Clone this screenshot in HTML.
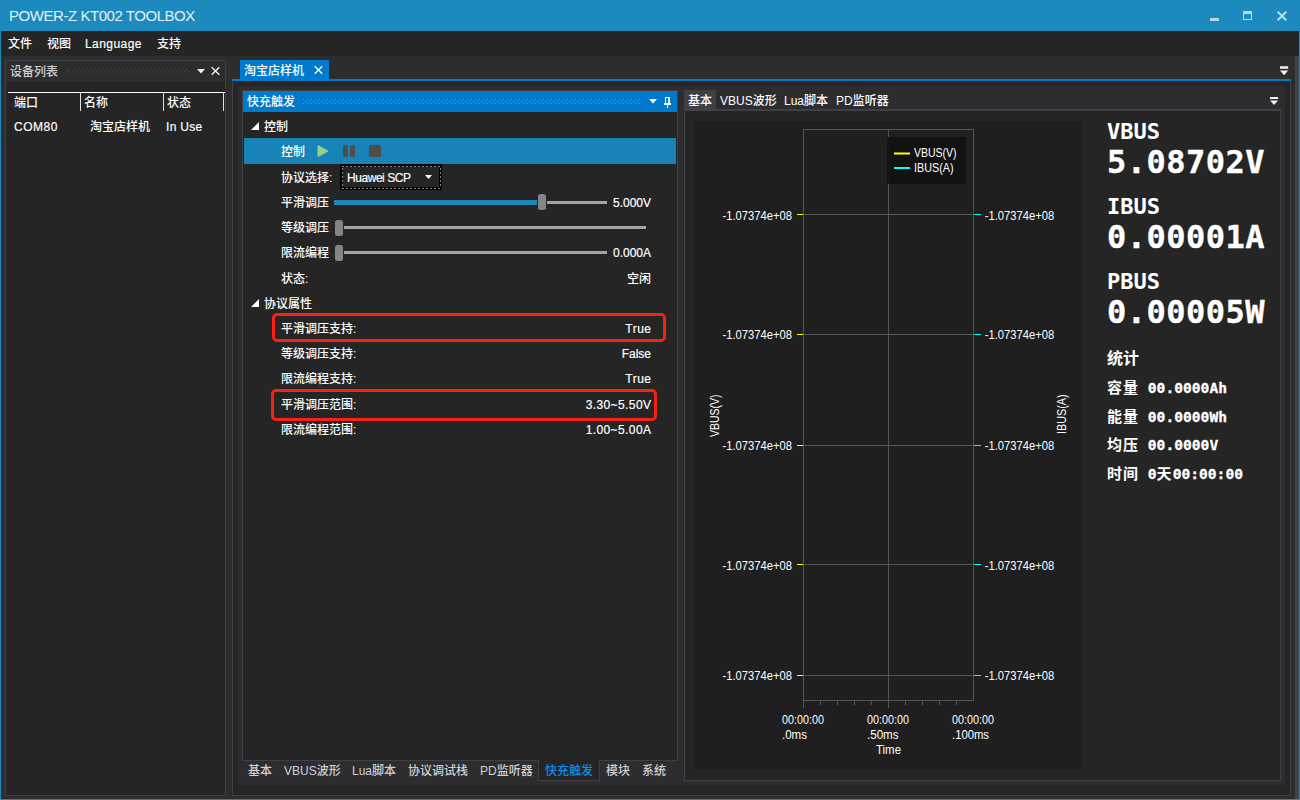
<!DOCTYPE html>
<html lang="zh-CN">
<head>
<meta charset="utf-8">
<title>POWER-Z KT002 TOOLBOX</title>
<style>
*{box-sizing:border-box;margin:0;padding:0}
html,body{width:1300px;height:800px;overflow:hidden;background:#2d2d30}
body{position:relative;font-family:"Liberation Sans","Noto Sans CJK SC",sans-serif;font-size:12px;color:#fff;line-height:16px;font-weight:500}
.a{position:absolute}
.t{position:absolute;white-space:nowrap;line-height:16px;height:16px;font-size:12px;color:#fff}
.r{text-align:right}
.l{-webkit-text-stroke:0.18px #fff}
.ct{stroke:none}
.mono{font-family:"DejaVu Sans Mono","Noto Sans CJK SC",monospace;font-weight:bold}
.bd{border:1px solid #3f3f46}
svg{position:absolute;overflow:visible}
.st{font-size:16px;line-height:22px;height:22px}
.st .mono{font-size:14.62px;-webkit-text-stroke:0.3px #fff}
.st b{font-size:15px;letter-spacing:1px}
.grip{background-image:radial-gradient(circle at 0.5px 0.5px,#4b4b50 0.6px,transparent 0.7px),radial-gradient(circle at 2.5px 2.5px,#4b4b50 0.6px,transparent 0.7px);background-size:4px 4px}
.grip2{background-image:radial-gradient(circle at 0.5px 0.5px,#459fe0 0.6px,transparent 0.7px),radial-gradient(circle at 2.5px 2.5px,#459fe0 0.6px,transparent 0.7px);background-size:4px 4px}

</style>
</head>
<body>
<!-- window frame -->
<div class="a" style="left:0;top:0;width:1300px;height:800px;background:#1c8abc"></div>
<div class="a" style="left:1px;top:31px;width:1298px;height:768px;background:#2d2d30"></div>
<!-- title bar -->
<div class="t" id="title" style="left:9px;top:6px;font-size:15px;line-height:20px;height:20px;color:#e2f0f8;letter-spacing:-0.45px">POWER-Z KT002 TOOLBOX</div>
<!-- window buttons -->
<div class="a" style="left:1210px;top:18px;width:9px;height:3px;background:#b6daec"></div>
<div class="a" style="left:1243px;top:11px;width:9px;height:9px;border:1px solid #b6daec;border-top-width:3px"></div>
<svg style="left:1277px;top:11px" width="10" height="10" viewBox="0 0 10 10"><path d="M0.7 0.7L9.3 9.3M9.3 0.7L0.7 9.3" stroke="#b6daec" stroke-width="2.1" fill="none"/></svg>
<!-- menu bar -->
<div class="a" style="left:1px;top:31px;width:1298px;height:25px;background:#252526"></div>
<div class="t" style="left:8px;top:36px">文件</div>
<div class="t" style="left:47px;top:36px">视图</div>
<div class="t l" id="lang" style="left:85px;top:36px;letter-spacing:0.45px">Language</div>
<div class="t" style="left:157px;top:36px">支持</div>
<!-- right strip -->
<div class="a" style="left:1295px;top:56px;width:4px;height:743px;background:#444445"></div>

<!-- LEFT PANEL -->
<div class="a bd" style="left:5px;top:60px;width:221px;height:736px;background:#252526"></div>
<div class="a" style="left:6px;top:61px;width:219px;height:21px;background:#2d2d30"></div>
<div class="t" style="left:10px;top:64px;color:#d0d0d0">设备列表</div>
<div class="a grip" style="left:66px;top:69px;width:124px;height:6px"></div>
<svg style="left:197px;top:69px" width="8" height="5" viewBox="0 0 8 5"><path d="M0 0H8L4 4.5Z" fill="#f1f1f1"/></svg>
<svg style="left:211px;top:67px" width="9" height="8" viewBox="0 0 9 8"><path d="M0.7 0.3L8.3 7.7M8.3 0.3L0.7 7.7" stroke="#f1f1f1" stroke-width="1.4" fill="none"/></svg>
<div class="a" style="left:8px;top:92px;width:217px;height:1px;background:#fff"></div>
<div class="a" style="left:80px;top:92px;width:1px;height:19px;background:#e0e0e0"></div>
<div class="a" style="left:163px;top:92px;width:1px;height:19px;background:#e0e0e0"></div>
<div class="a" style="left:223px;top:92px;width:1px;height:19px;background:#e0e0e0"></div>
<div class="t" style="left:14px;top:95px">端口</div>
<div class="t" style="left:84px;top:95px">名称</div>
<div class="t" style="left:167px;top:95px">状态</div>
<div class="t l" id="com" style="left:14px;top:119px;letter-spacing:0.5px">COM80</div>
<div class="t" style="left:90px;top:119px">淘宝店样机</div>
<div class="t l" id="inuse" style="left:166px;top:119px;letter-spacing:0.3px">In Use</div>

<!-- DOCUMENT AREA -->
<div class="a" style="left:240px;top:60px;width:89px;height:20px;background:#007acc"></div>
<div class="t" style="left:244px;top:63px">淘宝店样机</div>
<svg style="left:314px;top:66px" width="9" height="8" viewBox="0 0 9 8"><path d="M0.7 0.3L8.3 7.7M8.3 0.3L0.7 7.7" stroke="#fff" stroke-width="1.3" fill="none"/></svg>
<svg style="left:1280px;top:66px" width="8" height="10" viewBox="0 0 8 10"><path d="M0 0.3H8.2V2.8H0ZM0 4.4H8.2L4.1 9.2Z" fill="#f1f1f1"/></svg>
<div class="a bd" style="left:232px;top:79px;width:1059px;height:717px;background:#252526"></div>
<div class="a" style="left:232px;top:79px;width:1059px;height:2px;background:#007acc"></div>
<div class="a" style="left:238px;top:86px;width:1047px;height:699px;background:#2d2d30"></div>

<!-- QUICK CHARGE PANEL -->
<div class="a bd" style="left:242px;top:90px;width:436px;height:671px;background:#252526"></div>
<div class="a" style="left:243px;top:91px;width:434px;height:21px;background:#007acc"></div>
<div class="t" style="left:247px;top:94px">快充触发</div>
<div class="a grip2" style="left:303px;top:99px;width:338px;height:6px"></div>
<svg style="left:649px;top:99px" width="8" height="5" viewBox="0 0 8 5"><path d="M0 0H8L4 4.5Z" fill="#fff"/></svg>
<svg style="left:664px;top:97px" width="7" height="11" viewBox="0 0 7 11" shape-rendering="crispEdges"><path d="M1 0H6V6.3H4V1H2V6.3H1ZM0 6.2H7V7.6H0ZM3.1 7.6H4.1V10.6H3.1Z" fill="#fff"/></svg>

<!-- group 1 -->
<svg style="left:251px;top:122px" width="8" height="8" viewBox="0 0 8 8"><path d="M8 0V8H0Z" fill="#fff"/></svg>
<div class="t" style="left:264px;top:119px">控制</div>
<div class="a" style="left:244px;top:138px;width:432px;height:26px;background:#1883b6"></div>
<div class="t" style="left:281px;top:144px">控制</div>
<svg style="left:317px;top:144px" width="12" height="14" viewBox="0 0 12 14"><path d="M1.2 1.9L10.4 7.05L1.2 12.2Z" fill="#8fd48a" stroke="#8fd48a" stroke-width="1.4" stroke-linejoin="round"/></svg>
<div class="a" style="left:343px;top:145px;width:5px;height:12px;background:#4d4d4d;border-radius:1.5px"></div>
<div class="a" style="left:350px;top:145px;width:5px;height:12px;background:#4d4d4d;border-radius:1.5px"></div>
<div class="a" style="left:369px;top:145px;width:12px;height:12px;background:#4d4d4d;border-radius:1.5px"></div>

<div class="t" style="left:281px;top:170px">协议选择:</div>
<div class="a" style="left:340px;top:164px;width:102px;height:26px;background:#000"></div>
<div class="a" style="left:343px;top:167px;width:96px;height:20px;background:#252526"></div>
<svg style="left:340px;top:164px" width="102" height="26" viewBox="0 0 102 26"><rect x="2" y="2" width="98" height="22" fill="none" stroke="#8c8c8c" stroke-width="1" stroke-dasharray="2 2" shape-rendering="crispEdges"/></svg>
<div class="t l" id="huawei" style="left:347px;top:170px;letter-spacing:-0.45px">Huawei SCP</div>
<svg style="left:425px;top:175px" width="7" height="4" viewBox="0 0 7 4"><path d="M0 0H7L3.5 4Z" fill="#fff"/></svg>

<!-- sliders -->
<div class="t" style="left:281px;top:195px">平滑调压</div>
<div class="a" style="left:334px;top:200px;width:203px;height:5px;background:#1c87b9"></div>
<div class="a" style="left:547px;top:200.7px;width:60px;height:3.4px;background:#a5a5a5"></div>
<div class="a" style="left:538px;top:194px;width:8px;height:16px;background:#858585;border-radius:2.5px"></div>
<div class="t r l" id="v5" style="left:560px;width:91px;top:195px">5.000V</div>

<div class="t" style="left:281px;top:220px">等级调压</div>
<div class="a" style="left:344px;top:225.6px;width:302px;height:3.5px;background:#a5a5a5"></div>
<div class="a" style="left:335px;top:220px;width:8px;height:16px;background:#858585;border-radius:2.5px"></div>

<div class="t" style="left:281px;top:245px">限流编程</div>
<div class="a" style="left:344px;top:250.8px;width:263px;height:3.4px;background:#a5a5a5"></div>
<div class="a" style="left:335px;top:245px;width:8px;height:16px;background:#858585;border-radius:2.5px"></div>
<div class="t r l" id="a0" style="left:560px;width:91px;top:245px">0.000A</div>

<div class="t" style="left:281px;top:271px">状态:</div>
<div class="t r" style="left:560px;width:91px;top:271px">空闲</div>

<!-- group 2 -->
<svg style="left:251px;top:299px" width="8" height="8" viewBox="0 0 8 8"><path d="M8 0V8H0Z" fill="#fff"/></svg>
<div class="t" style="left:264px;top:296px">协议属性</div>
<div class="t" style="left:281px;top:321px">平滑调压支持:</div>
<div class="t r l" style="left:560px;width:91.5px;top:321px;letter-spacing:0.5px">True</div>
<div class="t" style="left:281px;top:346px">等级调压支持:</div>
<div class="t r l" style="left:560px;width:91px;top:346px">False</div>
<div class="t" style="left:281px;top:371px">限流编程支持:</div>
<div class="t r l" style="left:560px;width:91.5px;top:371px;letter-spacing:0.5px">True</div>
<div class="t" style="left:281px;top:397px">平滑调压范围:</div>
<div class="t r l" style="left:560px;width:91.4px;top:397px;letter-spacing:0.4px">3.30~5.50V</div>
<div class="t" style="left:281px;top:422px">限流编程范围:</div>
<div class="t r l" style="left:560px;width:91.4px;top:422px;letter-spacing:0.4px">1.00~5.00A</div>
<div class="a" style="left:272px;top:313px;width:394px;height:29px;border:3px solid #fb2014;border-radius:5px"></div>
<div class="a" style="left:271px;top:389px;width:386px;height:32px;border:3px solid #fb2014;border-radius:5px"></div>

<!-- bottom tabs -->
<div class="t" style="left:248px;top:763px;color:#d0d0d0">基本</div>
<div class="t" style="left:284px;top:763px;color:#d0d0d0">VBUS波形</div>
<div class="t" style="left:352px;top:763px;color:#d0d0d0">Lua脚本</div>
<div class="t" style="left:408px;top:763px;color:#d0d0d0">协议调试栈</div>
<div class="t" style="left:480px;top:763px;color:#d0d0d0">PD监听器</div>
<div class="a" style="left:538px;top:760px;width:62px;height:21px;background:#252526;border:1px solid #3f3f46;border-top:none"></div>
<div class="t" style="left:545px;top:763px;color:#0e8cf0">快充触发</div>
<div class="t" style="left:606px;top:763px;color:#d0d0d0">模块</div>
<div class="t" style="left:642px;top:763px;color:#d0d0d0">系统</div>

<!-- RIGHT PANEL -->
<div class="a" style="left:684px;top:90px;width:32px;height:20px;background:#3f3f46"></div>
<div class="t" style="left:688px;top:93px">基本</div>
<div class="t" style="left:720px;top:93px">VBUS波形</div>
<div class="t" style="left:784px;top:93px">Lua脚本</div>
<div class="t" style="left:836px;top:93px">PD监听器</div>
<svg style="left:1270px;top:97px" width="8" height="9" viewBox="0 0 8 9"><path d="M0 0H8.1V2.1H0ZM0 3.6H8.1L4.05 8.1Z" fill="#f1f1f1"/></svg>
<div class="a bd" style="left:684px;top:109px;width:597px;height:672px;background:#252526;border-top-width:2px"></div>
<div class="a" style="left:695px;top:121px;width:386px;height:648px;background:#1f1f1f"></div>
<svg id="chart" style="left:0;top:0" width="1300" height="800" viewBox="0 0 1300 800" font-family="Liberation Sans, sans-serif" font-size="12" fill="#fff">
<g stroke="#555" stroke-width="1" fill="none" shape-rendering="crispEdges">
<rect x="803.5" y="129.5" width="170" height="571"/>
<path d="M888.5 129V708M803.5 700V708"/>
<path d="M803 214.5H974"/>
<path d="M803 334.5H974"/>
<path d="M803 445.5H974"/>
<path d="M803 564.5H974"/>
<path d="M803 675.5H974"/>
<path d="M820.5 700V705M837.5 700V705M854.5 700V705M871.5 700V705M905.5 700V705M922.5 700V705M939.5 700V705M956.5 700V705"/>
</g>
<rect x="887" y="137" width="79" height="47" fill="#111" fill-opacity="0.92"/>
<path d="M894 153.5H910" stroke="#ffff00" stroke-width="2"/>
<path d="M894 168H910" stroke="#00ffff" stroke-width="2"/>
<text class="ct" x="914" y="157" textLength="42.5" lengthAdjust="spacingAndGlyphs">VBUS(V)</text>
<text class="ct" x="914" y="172" textLength="39.5" lengthAdjust="spacingAndGlyphs">IBUS(A)</text>
<path d="M797 214.5H803" stroke="#ffff00" stroke-width="1" shape-rendering="crispEdges"/>
<path d="M974 214.5H981" stroke="#00ffff" stroke-width="1" shape-rendering="crispEdges"/>
<text class="ct" x="722.5" y="220" textLength="69.5" lengthAdjust="spacingAndGlyphs">-1.07374e+08</text>
<text class="ct" x="984.7" y="220" textLength="69.5" lengthAdjust="spacingAndGlyphs">-1.07374e+08</text>
<path d="M797 334.5H803" stroke="#ffff00" stroke-width="1" shape-rendering="crispEdges"/>
<path d="M974 334.5H981" stroke="#00ffff" stroke-width="1" shape-rendering="crispEdges"/>
<text class="ct" x="722.5" y="339" textLength="69.5" lengthAdjust="spacingAndGlyphs">-1.07374e+08</text>
<text class="ct" x="984.7" y="339" textLength="69.5" lengthAdjust="spacingAndGlyphs">-1.07374e+08</text>
<path d="M797 445.5H803" stroke="#ffff00" stroke-width="1" shape-rendering="crispEdges"/>
<path d="M974 445.5H981" stroke="#00ffff" stroke-width="1" shape-rendering="crispEdges"/>
<text class="ct" x="722.5" y="450" textLength="69.5" lengthAdjust="spacingAndGlyphs">-1.07374e+08</text>
<text class="ct" x="984.7" y="450" textLength="69.5" lengthAdjust="spacingAndGlyphs">-1.07374e+08</text>
<path d="M797 564.5H803" stroke="#ffff00" stroke-width="1" shape-rendering="crispEdges"/>
<path d="M974 564.5H981" stroke="#00ffff" stroke-width="1" shape-rendering="crispEdges"/>
<text class="ct" x="722.5" y="570" textLength="69.5" lengthAdjust="spacingAndGlyphs">-1.07374e+08</text>
<text class="ct" x="984.7" y="570" textLength="69.5" lengthAdjust="spacingAndGlyphs">-1.07374e+08</text>
<path d="M797 675.5H803" stroke="#ffff00" stroke-width="1" shape-rendering="crispEdges"/>
<path d="M974 675.5H981" stroke="#00ffff" stroke-width="1" shape-rendering="crispEdges"/>
<text class="ct" x="722.5" y="680" textLength="69.5" lengthAdjust="spacingAndGlyphs">-1.07374e+08</text>
<text class="ct" x="984.7" y="680" textLength="69.5" lengthAdjust="spacingAndGlyphs">-1.07374e+08</text>
<text class="ct" x="782" y="724" textLength="42" lengthAdjust="spacingAndGlyphs">00:00:00</text>
<text class="ct" x="782" y="739" textLength="25" lengthAdjust="spacingAndGlyphs">.0ms</text>
<text class="ct" x="867" y="724" textLength="42" lengthAdjust="spacingAndGlyphs">00:00:00</text>
<text class="ct" x="867" y="739" textLength="31.5" lengthAdjust="spacingAndGlyphs">.50ms</text>
<text class="ct" x="952" y="724" textLength="42" lengthAdjust="spacingAndGlyphs">00:00:00</text>
<text class="ct" x="952" y="739" textLength="37" lengthAdjust="spacingAndGlyphs">.100ms</text>
<text class="ct" x="876" y="754" textLength="25" lengthAdjust="spacingAndGlyphs">Time</text>
<text class="ct" transform="translate(719 437) rotate(-90)" textLength="42.5" lengthAdjust="spacingAndGlyphs">VBUS(V)</text>
<text class="ct" transform="translate(1066 434) rotate(-90)" textLength="39.5" lengthAdjust="spacingAndGlyphs">IBUS(A)</text>
</svg>

<!-- readouts -->
<div class="t mono" style="left:1107px;top:119px;font-size:22px;line-height:26px;height:26px">VBUS</div>
<div class="t mono" style="left:1107px;top:142px;font-size:32px;letter-spacing:0.5px;-webkit-text-stroke:0.4px #fff;line-height:40px;height:40px">5.08702V</div>
<div class="t mono" style="left:1107px;top:194px;font-size:22px;line-height:26px;height:26px">IBUS</div>
<div class="t mono" style="left:1107px;top:217px;font-size:32px;letter-spacing:0.5px;-webkit-text-stroke:0.4px #fff;line-height:40px;height:40px">0.00001A</div>
<div class="t mono" style="left:1107px;top:269px;font-size:22px;line-height:26px;height:26px">PBUS</div>
<div class="t mono" style="left:1107px;top:292px;font-size:32px;letter-spacing:0.5px;-webkit-text-stroke:0.4px #fff;line-height:40px;height:40px">0.00005W</div>
<div class="t" style="left:1107px;top:348px;font-size:16px;line-height:22px;height:22px;font-weight:bold">统计</div>
<div class="t st" style="left:1107px;top:377px"><b>容量</b><span class="mono">&nbsp;00.0000Ah</span></div>
<div class="t st" style="left:1107px;top:406px"><b>能量</b><span class="mono">&nbsp;00.0000Wh</span></div>
<div class="t st" style="left:1107px;top:434px"><b>均压</b><span class="mono">&nbsp;00.0000V</span></div>
<div class="t st" style="left:1107px;top:463px"><b>时间</b><span class="mono">&nbsp;0</span><b>天</b><span class="mono">00:00:00</span></div>
</body>
</html>
